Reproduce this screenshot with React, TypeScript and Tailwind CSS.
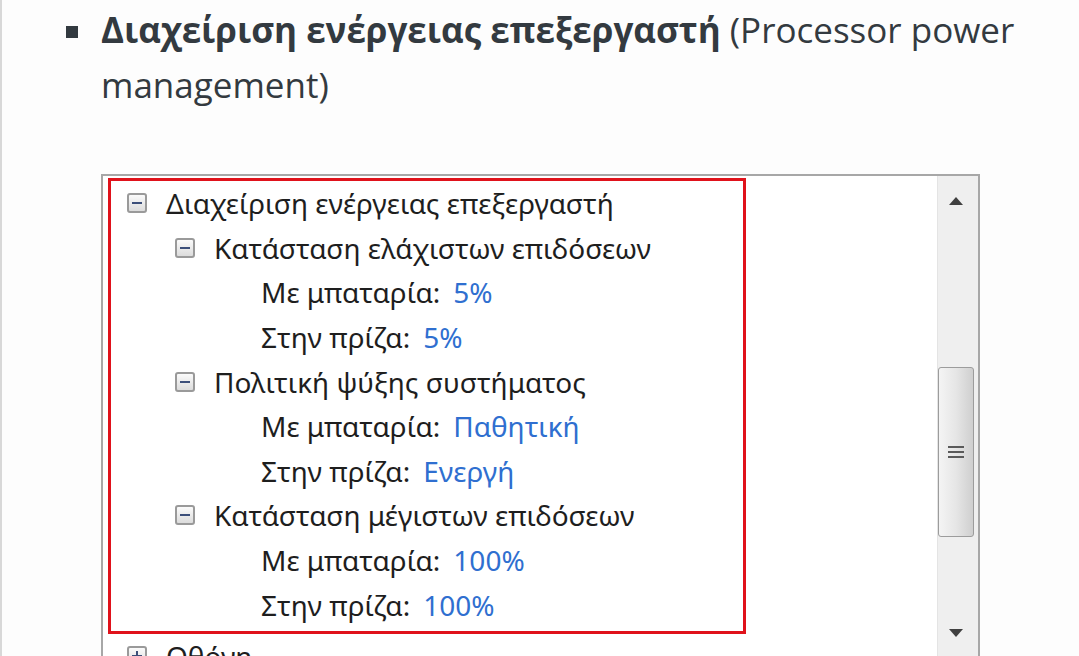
import React from 'react'

type Row = {
  level: 1 | 2 | 3
  label: string
  value?: string
  toggle?: 'minus' | 'plus'
}

const rows: Row[] = [
  { level: 1, label: 'Διαχείριση ενέργειας επεξεργαστή', toggle: 'minus' },
  { level: 2, label: 'Κατάσταση ελάχιστων επιδόσεων', toggle: 'minus' },
  { level: 3, label: 'Με μπαταρία:', value: '5%' },
  { level: 3, label: 'Στην πρίζα:', value: '5%' },
  { level: 2, label: 'Πολιτική ψύξης συστήματος', toggle: 'minus' },
  { level: 3, label: 'Με μπαταρία:', value: 'Παθητική' },
  { level: 3, label: 'Στην πρίζα:', value: 'Ενεργή' },
  { level: 2, label: 'Κατάσταση μέγιστων επιδόσεων', toggle: 'minus' },
  { level: 3, label: 'Με μπαταρία:', value: '100%' },
  { level: 3, label: 'Στην πρίζα:', value: '100%' },
]

function Toggle({ kind }: { kind: 'minus' | 'plus' }) {
  return (
    <span className="w-[20px] h-[20px] shrink-0 rounded-[3px] border-2 border-[#9a9a9a] bg-gradient-to-b from-[#fbfbfb] to-[#dcdcdc] flex items-center justify-center relative">
      <span className="w-[10px] h-[2px] bg-[#3c4f7a]" />
      {kind === 'plus' && <span className="absolute w-[2px] h-[10px] bg-[#3c4f7a]" />}
    </span>
  )
}

function TreeRow({ row }: { row: Row }) {
  const indent = row.level === 1 ? 'pl-[16px]' : row.level === 2 ? 'pl-[64px]' : 'pl-[150px]'
  return (
    <div className={`h-[44.6px] flex items-center gap-[19px] ${indent}`}>
      {row.toggle && <Toggle kind={row.toggle} />}
      <span className="text-[#1e1e1e] whitespace-nowrap">
        {row.label}
        {row.value && <span className="text-[#2f6fd0] ml-[13px]">{row.value}</span>}
      </span>
    </div>
  )
}

function Scrollbar() {
  return (
    <div className="w-[41px] shrink-0 bg-[#efefef] border-l border-[#e4e4e4] flex flex-col">
      <div className="h-[50px] flex items-center justify-center pr-[4px]">
        <svg width="14" height="8" viewBox="0 0 14 8">
          <path d="M7 0 L14 8 L0 8 Z" fill="#404040" />
        </svg>
      </div>
      <div className="h-[141px]" />
      <div className="w-[36px] h-[170px] rounded-[3px] border border-[#9c9c9c] bg-gradient-to-r from-[#f4f4f4] via-[#e6e6e6] to-[#cfcfcf] flex flex-col items-center justify-center gap-[3px]">
        <span className="w-[16px] h-[2px] bg-[#5a5a5a]" />
        <span className="w-[16px] h-[2px] bg-[#5a5a5a]" />
        <span className="w-[16px] h-[2px] bg-[#5a5a5a]" />
      </div>
      <div className="flex-1" />
      <div className="h-[46px] flex items-center justify-center pr-[4px]">
        <svg width="14" height="8" viewBox="0 0 14 8">
          <path d="M0 0 L14 0 L7 8 Z" fill="#404040" />
        </svg>
      </div>
    </div>
  )
}

export default function App() {
  return (
    <div className="w-[1079px] h-[656px] overflow-hidden bg-[#fdfdfd] border-l-2 border-[#d8d8d8]" style={{ fontFamily: '"Open Sans", sans-serif' }}>
      <div className="pl-[64px] pt-[2px] pr-[30px]">
        <div className="flex items-start">
          <span className="w-[12px] h-[12px] bg-[#333a40] mt-[24px] shrink-0" />
          <p className="ml-[23px] text-[35px] leading-[55px] text-[#333a40]">
            <b className="font-bold">Διαχείριση ενέργειας επεξεργαστή</b> (Processor power management)
          </p>
        </div>
      </div>

      <div className="ml-[99px] mt-[62px] w-[879px] h-[484px] border-2 border-[#a7a7a7] bg-white flex">
        <div className="flex-1 pl-[5px] pt-[2px] text-[28px]" style={{ fontFamily: '"Noto Sans", sans-serif' }}>
          <div className="w-[638px] border-[3px] border-[#e0121b] pb-[4px]">
            {rows.map((r, i) => (
              <TreeRow key={i} row={r} />
            ))}
          </div>
          <div className="h-[44px] flex items-center gap-[19px] pl-[19px]">
            <Toggle kind="plus" />
            <span className="text-[#1e1e1e]">Οθόνη</span>
          </div>
        </div>
        <Scrollbar />
      </div>
    </div>
  )
}
